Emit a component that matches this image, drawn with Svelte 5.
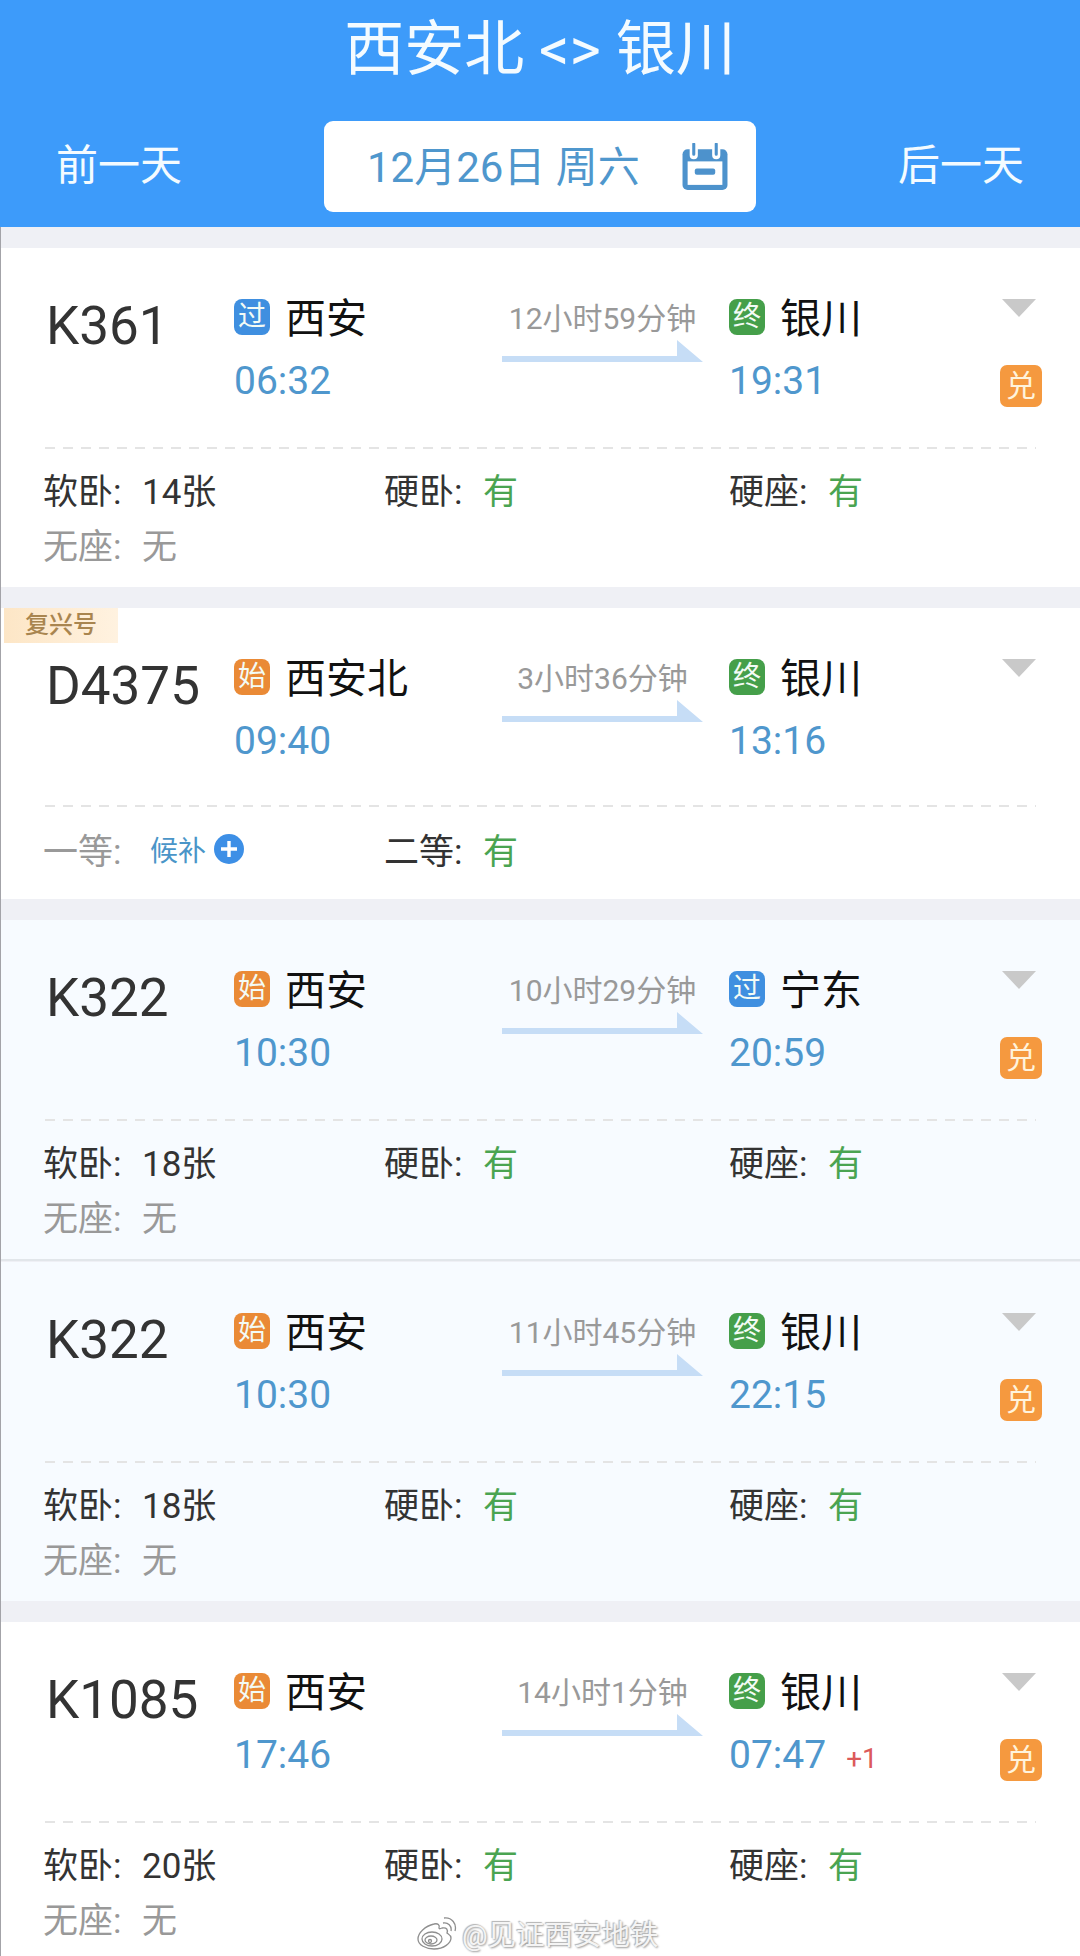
<script>
  const Y = { t: '有', c: 'green' };
  const N = { t: '无', c: 'mute' };
  const trains = [
    { no: 'K361', from: '西安', fromTag: '过', fromKind: 'pass', dep: '06:32', dur: '12小时59分钟', to: '银川', toTag: '终', toKind: 'end', arr: '19:31', dui: true,
      seats: [['软卧', { t: '14张' }], ['硬卧', Y], ['硬座', Y], ['无座', N, true]] },
    { no: 'D4375', fuxing: true, from: '西安北', fromTag: '始', fromKind: 'start', dep: '09:40', dur: '3小时36分钟', to: '银川', toTag: '终', toKind: 'end', arr: '13:16',
      seats: [['一等', { wait: true }, true], ['二等', Y]] },
    { no: 'K322', tint: true, joined: true, from: '西安', fromTag: '始', fromKind: 'start', dep: '10:30', dur: '10小时29分钟', to: '宁东', toTag: '过', toKind: 'pass', arr: '20:59', dui: true,
      seats: [['软卧', { t: '18张' }], ['硬卧', Y], ['硬座', Y], ['无座', N, true]] },
    { no: 'K322', tint: true, from: '西安', fromTag: '始', fromKind: 'start', dep: '10:30', dur: '11小时45分钟', to: '银川', toTag: '终', toKind: 'end', arr: '22:15', dui: true,
      seats: [['软卧', { t: '18张' }], ['硬卧', Y], ['硬座', Y], ['无座', N, true]] },
    { no: 'K1085', from: '西安', fromTag: '始', fromKind: 'start', dep: '17:46', dur: '14小时1分钟', to: '银川', toTag: '终', toKind: 'end', arr: '07:47', plus: '+1', dui: true,
      seats: [['软卧', { t: '20张' }], ['硬卧', Y], ['硬座', Y], ['无座', N, true]] }
  ];
</script>

<div class="page">
  <header class="head">
    <h1 class="title">西安北 &lt;&gt; 银川</h1>
    <div class="dates">
      <span class="day">前一天</span>
      <div class="picker">
        <span class="date">12月26日 周六</span>
        <svg class="cal" viewBox="0 0 44 46" width="46" height="47" aria-hidden="true">
          <rect x="0" y="6" width="44" height="40" rx="5" fill="#4d92cc"/>
          <rect x="5" y="18" width="34" height="23" fill="#fff"/>
          <path d="M11 3v9M33 3v9" stroke="#fff" stroke-width="8" stroke-linecap="round"/>
          <path d="M11 1v10M33 1v10" stroke="#4d92cc" stroke-width="3" stroke-linecap="round"/>
          <rect x="12" y="25" width="20" height="6" rx="2" fill="#4d92cc"/>
        </svg>
      </div>
      <span class="day">后一天</span>
    </div>
  </header>

  <main class="list">
    {#each trains as tr}
      <article class="card" class:tint={tr.tint} class:joined={tr.joined} class:single={tr.seats.length < 3}>
        {#if tr.fuxing}<span class="fuxing">复兴号</span>{/if}
        <div class="top">
          <div class="no">{tr.no}</div>
          <div class="stop">
            <div class="station"><span class="tag {tr.fromKind}">{tr.fromTag}</span><span class="name">{tr.from}</span></div>
            <div class="time">{tr.dep}</div>
          </div>
          <div class="span">
            <div class="dur">{tr.dur}</div>
            <svg class="arrow" viewBox="0 0 201 22" width="201" height="22" aria-hidden="true">
              <path fill="#c6ddf6" d="M0 16h175V0l26 22H0z"/>
            </svg>
          </div>
          <div class="stop">
            <div class="station"><span class="tag {tr.toKind}">{tr.toTag}</span><span class="name">{tr.to}</span></div>
            <div class="time">{tr.arr}{#if tr.plus}<span class="plus">{tr.plus}</span>{/if}</div>
          </div>
          <div class="side">
            <svg class="chev" viewBox="0 0 34 18" width="34" height="18" aria-hidden="true"><path fill="#c9c9c9" d="M0 0h34L17 18z"/></svg>
            {#if tr.dui}<span class="dui">兑</span>{/if}
          </div>
        </div>
        <div class="rule"></div>
        <div class="seats">
          {#each tr.seats as s}
            <div class="seat" class:off={s[2]}>
              <span class="lab">{s[0]}:</span>
              {#if s[1].wait}
                <span class="wait">候补</span>
                <svg class="add" viewBox="0 0 30 30" width="30" height="30" aria-hidden="true">
                  <circle cx="15" cy="15" r="15" fill="#3d8fe6"/>
                  <path d="M15 7v16M7 15h16" stroke="#fff" stroke-width="3.4"/>
                </svg>
              {:else}
                <span class="val {s[1].c || ''}">{s[1].t}</span>
              {/if}
            </div>
          {/each}
        </div>
      </article>
    {/each}
  </main>

  <div class="mark">
    <svg viewBox="0 0 40 34" width="40" height="34" aria-hidden="true" fill="none" stroke="#8f8f8f" stroke-width="1.3">
      <path d="M17 8C8 10 1 17 1 23c0 6 8 10 16 10 10 0 17-6 17-11 0-3-3-4-4-5 1-3 0-6-5-5-2 1-3 1-3 0 1-3-1-5-5-4z"/>
      <ellipse cx="15" cy="23" rx="10" ry="7"/>
      <ellipse cx="14" cy="24" rx="6" ry="4"/>
      <circle cx="13" cy="25" r="1.5"/>
      <path d="M26 7c5-1 9 3 8 8M27 2c8-1 13 6 11 13"/>
    </svg>
    <span>@见证西安地铁</span>
  </div>
</div>

<style>
  :global(body) {
    margin: 0;
  }
  .page {
    position: relative;
    width: 1080px;
    height: 1956px;
    overflow: hidden;
    background: #eff0f5;
    font-family: Roboto, "Noto Sans CJK SC", sans-serif;
  }
  .page::after {
    content: "";
    position: absolute;
    left: 0;
    top: 227px;
    bottom: 0;
    width: 1px;
    background: #a3a3a8;
  }
  .head {
    height: 227px;
    background: #3d9bfa;
    color: #f4fbff;
  }
  .title {
    margin: 0;
    height: 100px;
    line-height: 100px;
    text-align: center;
    font-size: 60px;
    font-weight: 400;
  }
  .dates {
    display: flex;
    align-items: center;
    justify-content: space-between;
    margin-top: 21px;
    padding: 0 56px;
  }
  .day {
    margin-top: -2px;
    font-size: 42px;
    line-height: 48px;
  }
  .picker {
    display: flex;
    align-items: center;
    gap: 42px;
    box-sizing: border-box;
    width: 432px;
    height: 91px;
    padding-left: 43px;
    background: #fff;
    border-radius: 9px;
  }
  .date {
    margin-top: -6px;
    color: #4f97cd;
    font-size: 42px;
    white-space: nowrap;
  }
  .cal {
    flex: none;
  }
  .list {
    display: flex;
    flex-direction: column;
    gap: 21px;
    padding-top: 21px;
  }
  .card {
    position: relative;
    box-sizing: border-box;
    padding: 51px 0 16px;
    background: #fff;
  }
  .card.single {
    padding-bottom: 23px;
  }
  .card.single .seats {
    margin-top: 14px;
  }
  .card.tint {
    background: #f7fbff;
  }
  .card.joined {
    margin-bottom: -20px;
    border-bottom: 2px solid #e2e6ea;
  }
  .fuxing {
    position: absolute;
    left: 4px;
    top: 0;
    width: 114px;
    height: 35px;
    line-height: 35px;
    text-align: center;
    font-size: 24px;
    font-weight: 500;
    color: #a9854f;
    background: linear-gradient(90deg, #fde6c6, #fff2e0);
  }
  .top {
    display: grid;
    grid-template-columns: 188px 267px 228px 271px auto;
    padding-left: 46px;
  }
  .no {
    margin-top: 2px;
    height: 50px;
    line-height: 50px;
    font-size: 53px;
    color: #333;
  }
  .station {
    display: flex;
    align-items: center;
    gap: 15px;
    height: 36px;
  }
  .tag {
    flex: none;
    width: 36px;
    height: 36px;
    line-height: 36px;
    text-align: center;
    border-radius: 8px;
    font-size: 28px;
    color: #f3fbf5;
  }
  .tag.pass {
    background: #3f8fe0;
  }
  .tag.start {
    background: #ea8a36;
  }
  .tag.end {
    background: #459f4a;
  }
  .name {
    padding-top: 4px;
    font-size: 41px;
    line-height: 46px;
    color: #111;
    white-space: nowrap;
  }
  .time {
    margin-top: 22px;
    height: 48px;
    line-height: 48px;
    font-size: 39px;
    color: #4f97cd;
  }
  .plus {
    margin-left: 20px;
    font-size: 28px;
    color: #dc5a5a;
  }
  .span {
    display: flex;
    flex-direction: column;
    padding-left: 1px;
  }
  .dur {
    width: 201px;
    height: 36px;
    margin-top: 2px;
    line-height: 36px;
    text-align: center;
    font-size: 30px;
    color: #999;
    white-space: nowrap;
  }
  .arrow {
    display: block;
    margin-top: 3px;
  }
  .side {
    display: flex;
    flex-direction: column;
    align-items: flex-start;
  }
  .chev {
    display: block;
    margin-left: 2px;
  }
  .dui {
    margin-top: 48px;
    width: 42px;
    height: 42px;
    line-height: 42px;
    text-align: center;
    border-radius: 7px;
    font-size: 30px;
    color: #fff3dc;
    background: #f5993f;
  }
  .rule {
    height: 2px;
    margin: 40px 44px 0 45px;
    background: repeating-linear-gradient(90deg, #e4e4e4 0 10px, transparent 10px 18px);
  }
  .seats {
    display: grid;
    grid-template-columns: 341px 345px auto;
    grid-auto-rows: 55px;
    margin-top: 12px;
    padding-left: 43px;
  }
  .seat {
    display: flex;
    align-items: center;
    font-size: 35px;
    color: #333;
  }
  .seat.off {
    color: #999;
  }
  .lab {
    flex: none;
    width: 99px;
  }
  .val.green {
    color: #4aa451;
  }
  .wait {
    margin-left: 8px;
    font-size: 28px;
    color: #4a95c8;
  }
  .add {
    margin-left: 8px;
  }
  .mark {
    position: absolute;
    left: 417px;
    top: 1912px;
    display: flex;
    align-items: center;
    gap: 5px;
    font-size: 28.5px;
    color: #f4f4f4;
    text-shadow: 1px 1px 2px #9a9a9a, -1px -1px 1px #b5b5b5;
  }
</style>
